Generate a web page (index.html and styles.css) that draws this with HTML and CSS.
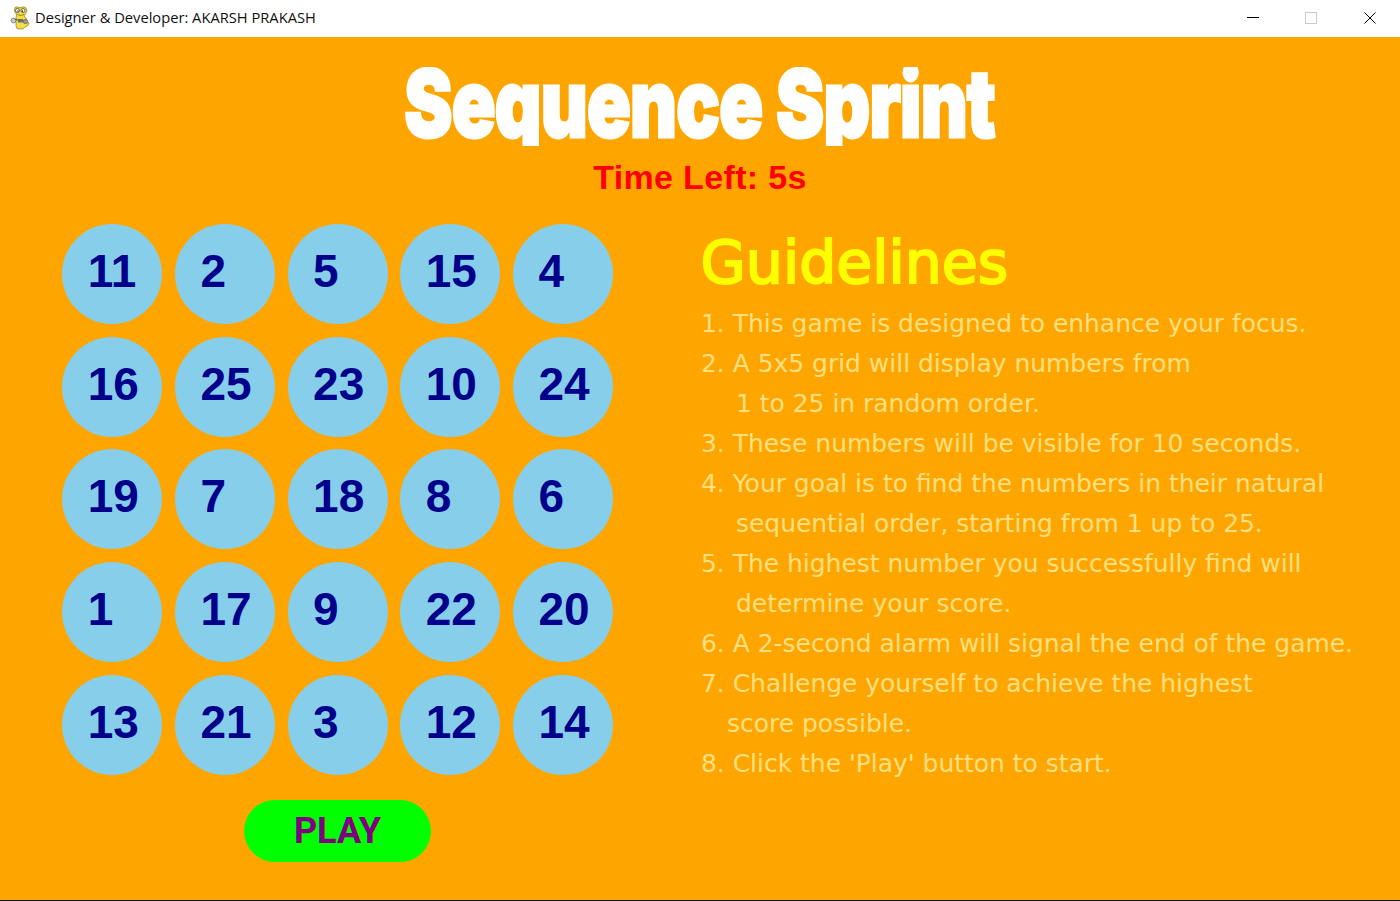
FILE: index.html
```html
<!DOCTYPE html>
<html lang="en">
<head>
<meta charset="utf-8">
<title>Sequence Sprint</title>
<link rel="stylesheet" href="styles.css">
</head>
<body>
<div class="window">
  <header class="titlebar">
    <svg class="app-icon" viewBox="0 0 20 24" aria-hidden="true">
      <path d="M5 1.5 Q7 0 9 1.5 Q10 2 11 1.5 Q14 0 16 2 Q18 5 15.5 8 Q14.5 9 14 10 Q17 12 17 15 L19 17 Q19 20 15 21 Q14 23.5 10 23 Q6 23.5 6 20 L6 12 Q6 10 7 9 Q3 6 5 1.5Z" fill="#f3dc45" stroke="#8a7a20" stroke-width=".7"/>
      <circle cx="7.5" cy="4.5" r="2" fill="#fff" stroke="#333" stroke-width=".7"/>
      <circle cx="13" cy="4.5" r="2" fill="#fff" stroke="#333" stroke-width=".7"/>
      <circle cx="8" cy="5" r=".7" fill="#111"/>
      <circle cx="12.5" cy="5" r=".7" fill="#111"/>
      <path d="M7.5 8.5 Q10.5 10.5 14 8.5" fill="none" stroke="#7a6a18" stroke-width=".8"/>
      <circle cx="3.5" cy="14.5" r="2.4" fill="#c9c9c9" stroke="#555" stroke-width=".6"/>
      <path d="M5 13.5 L15 15" stroke="#555" stroke-width="1.2"/>
      <circle cx="15.5" cy="15.5" r="2.2" fill="#a98f96" stroke="#555" stroke-width=".6"/>
      <rect x="8" y="13" width="5" height="3.4" fill="#6c6c6c"/>
    </svg>
    <span class="window-title">Designer &amp; Developer: AKARSH PRAKASH</span>
    <div class="controls">
      <span class="control"><svg viewBox="0 0 12 12" width="12" height="12"><path d="M0 5.5H12" stroke="#000" fill="none"/></svg></span>
      <span class="control"><svg viewBox="0 0 12 12" width="12" height="12"><rect x=".5" y=".5" width="11" height="11" fill="none" stroke="#ccc"/></svg></span>
      <span class="control"><svg viewBox="0 0 12 12" width="12" height="12"><path d="M.5 .5L11.5 11.5M11.5 .5L.5 11.5" stroke="#000" fill="none"/></svg></span>
    </div>
  </header>
  <main class="game">
    <div class="heading">
      <h1 class="title">Sequence Sprint</h1>
      <div class="timer">Time Left: 5s</div>
    </div>
    <div class="content">
      <section class="board">
        <div class="grid">
          <div class="cell">11</div><div class="cell">2</div><div class="cell">5</div><div class="cell">15</div><div class="cell">4</div>
          <div class="cell">16</div><div class="cell">25</div><div class="cell">23</div><div class="cell">10</div><div class="cell">24</div>
          <div class="cell">19</div><div class="cell">7</div><div class="cell">18</div><div class="cell">8</div><div class="cell">6</div>
          <div class="cell">1</div><div class="cell">17</div><div class="cell">9</div><div class="cell">22</div><div class="cell">20</div>
          <div class="cell">13</div><div class="cell">21</div><div class="cell">3</div><div class="cell">12</div><div class="cell">14</div>
        </div>
        <button class="play">PLAY</button>
      </section>
      <section class="guide">
        <h2 class="guide-title">Guidelines</h2>
        <ul class="guide-list">
          <li>1. This game is designed to enhance your focus.</li>
          <li>2. A 5x5 grid will display numbers from</li>
          <li class="indent">1 to 25 in random order.</li>
          <li>3. These numbers will be visible for 10 seconds.</li>
          <li>4. Your goal is to find the numbers in their natural</li>
          <li class="indent">sequential order, starting from 1 up to 25.</li>
          <li>5. The highest number you successfully find will</li>
          <li class="indent">determine your score.</li>
          <li>6. A 2-second alarm will signal the end of the game.</li>
          <li>7. Challenge yourself to achieve the highest</li>
          <li class="indent-small">score possible.</li>
          <li>8. Click the 'Play' button to start.</li>
        </ul>
      </section>
    </div>
  </main>
</div>
</body>
</html>
```
FILE: styles.css
```css
* { box-sizing: border-box; }
html, body { margin: 0; height: 100%; overflow: hidden; }
.window { width: 1400px; height: 901px; display: flex; flex-direction: column; background: #fff; }
.titlebar { height: 37px; flex: none; display: flex; align-items: center; padding: 0 1px 1px 10px; background: #fff; }
.app-icon { width: 20px; height: 24px; flex: none; }
.window-title { margin: 0 0 2px 5px; font: 14.7px "Open Sans", sans-serif; color: #111; white-space: nowrap; }
.controls { margin-left: auto; display: flex; }
.control { width: 58.5px; height: 36px; display: flex; align-items: center; justify-content: center; }
.game { flex: 1; background: #ffa500; border-bottom: 1px solid #111; display: flex; flex-direction: column; }
.heading { height: 187.3px; flex: none; display: flex; flex-direction: column; align-items: center; }
.title { margin: 23px 0 0; height: 86px; font: 900 94px/86px "Inter", sans-serif; color: #fff; -webkit-text-stroke: 3px #fff; letter-spacing: -1px; transform: scaleX(.77); white-space: nowrap; clip-path: inset(7px -20px 0 -20px); }
.timer { margin-top: 11px; font: 700 34px/40px "Liberation Sans", sans-serif; letter-spacing: .35px; color: #f00; }
.content { display: flex; flex: 1; padding-left: 62.4px; }
.board { width: 638.6px; flex: none; }
.grid { display: grid; grid-template-columns: repeat(5, 100px); grid-auto-rows: 100px; gap: 12.6px 12.7px; }
.cell { width: 100px; height: 100px; border-radius: 50%; background: #87ceeb; color: #00008b; font: 700 46px/94px "Liberation Sans", sans-serif; padding-left: 25.3px; }
.play { display: block; width: 187px; height: 62.5px; margin: 25px 0 0 181.6px; padding: 0; border: 0; border-radius: 32px; background: #0f0; color: #800080; font: 700 36px/62px "Roboto", sans-serif; }
.guide { flex: 1; color: #ffe080; }
.guide-title { margin: 7.7px 0 0 -.5px; font: 400 58.5px/62px "DejaVu Sans", sans-serif; -webkit-text-stroke: 2px #ff0; color: #ff0; }
.guide-list { list-style: none; margin: 10px 0 0; padding: 0; font: 24.95px/40px "DejaVu Sans", sans-serif; white-space: nowrap; }
.indent { padding-left: 35px; }
.indent-small { padding-left: 26px; }
```
